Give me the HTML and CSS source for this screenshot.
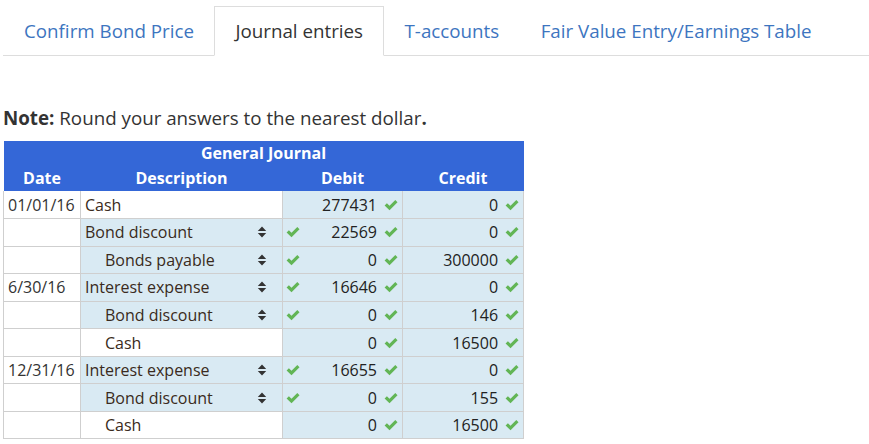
FILE: index.html
```html
<!DOCTYPE html>
<html>
<head>
<meta charset="utf-8">
<link rel="stylesheet" href="styles.css">
</head>
<body>
<svg width="0" height="0" class="defs">
  <defs>
    <symbol id="chk" viewBox="0 0 14 12">
      <path d="M0.6 6.4 L2.9 4.2 L5.5 6.8 L11.3 1 L13.5 3.2 L5.5 11.2 Z" fill="#62b555"/>
    </symbol>
    <symbol id="sort" viewBox="0 0 10 12">
      <path d="M5 0.5 L9.2 5 L0.8 5 Z M5 11.5 L9.2 7 L0.8 7 Z" fill="#333"/>
    </symbol>
  </defs>
</svg>
<div class="page">
  <ul class="tabs">
    <li class="tab">Confirm Bond Price</li>
    <li class="tab active">Journal entries</li>
    <li class="tab">T-accounts</li>
    <li class="tab">Fair Value Entry/Earnings Table</li>
  </ul>

  <p class="note"><b>Note:</b> Round your answers to the nearest dollar<b>.</b></p>

  <table class="journal">
    <colgroup>
      <col class="c-date"><col class="c-desc"><col class="c-num"><col class="c-num2">
    </colgroup>
    <thead>
      <tr class="h1"><th colspan="4">General Journal</th></tr>
      <tr class="h2"><th>Date</th><th>Description</th><th>Debit</th><th>Credit</th></tr>
    </thead>
    <tbody>
      <tr>
        <td class="date">01/01/16</td>
        <td class="desc">Cash</td>
        <td class="num"><div class="cell"><span class="spacer"></span><span class="val">277431<svg class="ck"><use href="#chk"/></svg></span></div></td>
        <td class="num"><div class="cell"><span class="spacer"></span><span class="val">0<svg class="ck"><use href="#chk"/></svg></span></div></td>
      </tr>
      <tr>
        <td class="date"></td>
        <td class="desc sel"><div class="cell"><span>Bond discount</span><svg class="ar"><use href="#sort"/></svg></div></td>
        <td class="num"><div class="cell"><svg class="ck"><use href="#chk"/></svg><span class="val">22569<svg class="ck"><use href="#chk"/></svg></span></div></td>
        <td class="num"><div class="cell"><span class="spacer"></span><span class="val">0<svg class="ck"><use href="#chk"/></svg></span></div></td>
      </tr>
      <tr>
        <td class="date"></td>
        <td class="desc sel"><div class="cell ind"><span>Bonds payable</span><svg class="ar"><use href="#sort"/></svg></div></td>
        <td class="num"><div class="cell"><svg class="ck"><use href="#chk"/></svg><span class="val">0<svg class="ck"><use href="#chk"/></svg></span></div></td>
        <td class="num"><div class="cell"><span class="spacer"></span><span class="val">300000<svg class="ck"><use href="#chk"/></svg></span></div></td>
      </tr>
      <tr>
        <td class="date">6/30/16</td>
        <td class="desc sel"><div class="cell"><span>Interest expense</span><svg class="ar"><use href="#sort"/></svg></div></td>
        <td class="num"><div class="cell"><svg class="ck"><use href="#chk"/></svg><span class="val">16646<svg class="ck"><use href="#chk"/></svg></span></div></td>
        <td class="num"><div class="cell"><span class="spacer"></span><span class="val">0<svg class="ck"><use href="#chk"/></svg></span></div></td>
      </tr>
      <tr>
        <td class="date"></td>
        <td class="desc sel"><div class="cell ind"><span>Bond discount</span><svg class="ar"><use href="#sort"/></svg></div></td>
        <td class="num"><div class="cell"><svg class="ck"><use href="#chk"/></svg><span class="val">0<svg class="ck"><use href="#chk"/></svg></span></div></td>
        <td class="num"><div class="cell"><span class="spacer"></span><span class="val">146<svg class="ck"><use href="#chk"/></svg></span></div></td>
      </tr>
      <tr>
        <td class="date"></td>
        <td class="desc"><div class="cell ind"><span>Cash</span></div></td>
        <td class="num"><div class="cell"><span class="spacer"></span><span class="val">0<svg class="ck"><use href="#chk"/></svg></span></div></td>
        <td class="num"><div class="cell"><span class="spacer"></span><span class="val">16500<svg class="ck"><use href="#chk"/></svg></span></div></td>
      </tr>
      <tr>
        <td class="date">12/31/16</td>
        <td class="desc sel"><div class="cell"><span>Interest expense</span><svg class="ar"><use href="#sort"/></svg></div></td>
        <td class="num"><div class="cell"><svg class="ck"><use href="#chk"/></svg><span class="val">16655<svg class="ck"><use href="#chk"/></svg></span></div></td>
        <td class="num"><div class="cell"><span class="spacer"></span><span class="val">0<svg class="ck"><use href="#chk"/></svg></span></div></td>
      </tr>
      <tr>
        <td class="date"></td>
        <td class="desc sel"><div class="cell ind"><span>Bond discount</span><svg class="ar"><use href="#sort"/></svg></div></td>
        <td class="num"><div class="cell"><svg class="ck"><use href="#chk"/></svg><span class="val">0<svg class="ck"><use href="#chk"/></svg></span></div></td>
        <td class="num"><div class="cell"><span class="spacer"></span><span class="val">155<svg class="ck"><use href="#chk"/></svg></span></div></td>
      </tr>
      <tr>
        <td class="date"></td>
        <td class="desc"><div class="cell ind"><span>Cash</span></div></td>
        <td class="num"><div class="cell"><span class="spacer"></span><span class="val">0<svg class="ck"><use href="#chk"/></svg></span></div></td>
        <td class="num"><div class="cell"><span class="spacer"></span><span class="val">16500<svg class="ck"><use href="#chk"/></svg></span></div></td>
      </tr>
    </tbody>
  </table>
</div>
</body>
</html>
```
FILE: styles.css
```css
* { box-sizing: border-box; }
html, body { margin: 0; padding: 0; background: #fff; }
body {
  font-family: "Open Sans", "DejaVu Sans", sans-serif;
  color: #333;
}
.defs { position: absolute; width: 0; height: 0; overflow: hidden; }
.page { padding: 6px 0 0 3px; }

.tabs {
  list-style: none;
  margin: 0;
  padding: 0;
  display: flex;
  border-bottom: 1px solid #ddd;
  height: 50px;
}
.tab {
  font-size: 18.75px;
  line-height: 48px;
  padding: 0 19.5px 0 20px;
  border: 1px solid transparent;
  color: #3d75c0;
  margin-right: 0;
}
.tab.active {
  color: #333;
  border-color: #ddd #ddd transparent #ddd;
  background: #fff;
  height: 50px;
}

.note {
  margin: 49px 0 0 0;
  font-size: 18.75px;
  line-height: 26px;
  color: #333;
}
.note b { font-weight: 700; }

.journal {
  margin-top: 10px;
  border-collapse: collapse;
  width: 520px;
  table-layout: fixed;
  font-size: 16px;
}
.c-date { width: 77px; }
.c-desc { width: 202px; }
.c-num { width: 120px; }
.c-num2 { width: 121px; }

.journal thead th {
  background: #3467d7;
  color: #fff;
  font-weight: 700;
  font-size: 16px;
  padding: 0;
  text-align: center;
}
.h1 th { height: 24px; line-height: 24px; }
.h2 th { height: 26px; line-height: 26px; }

.journal tbody td {
  border: 1px solid #cfcfcf;
  height: 27.55px;
  padding: 0;
  line-height: 20px;
  white-space: nowrap;
}
.journal tbody tr:first-child td { border-top: none; }
.date { padding-left: 4px !important; background: #fff; color: #333; }
.desc { background: #fff; padding-left: 4px !important; color: #3a2a20; }
.desc.sel { background: #d9eaf3; }
.num { background: #d9eaf3; color: #222; }

.cell {
  display: flex;
  align-items: center;
  justify-content: space-between;
}
.cell.ind { padding-left: 20px; }
.desc .cell { padding-right: 15px; }
.num .cell { padding: 0 4px 0 3px; }
.val { display: flex; align-items: center; gap: 7px; }
.ck { width: 14px; height: 12px; flex: none; }
.ar { width: 10px; height: 12px; flex: none; }
.spacer { width: 1px; }
```
